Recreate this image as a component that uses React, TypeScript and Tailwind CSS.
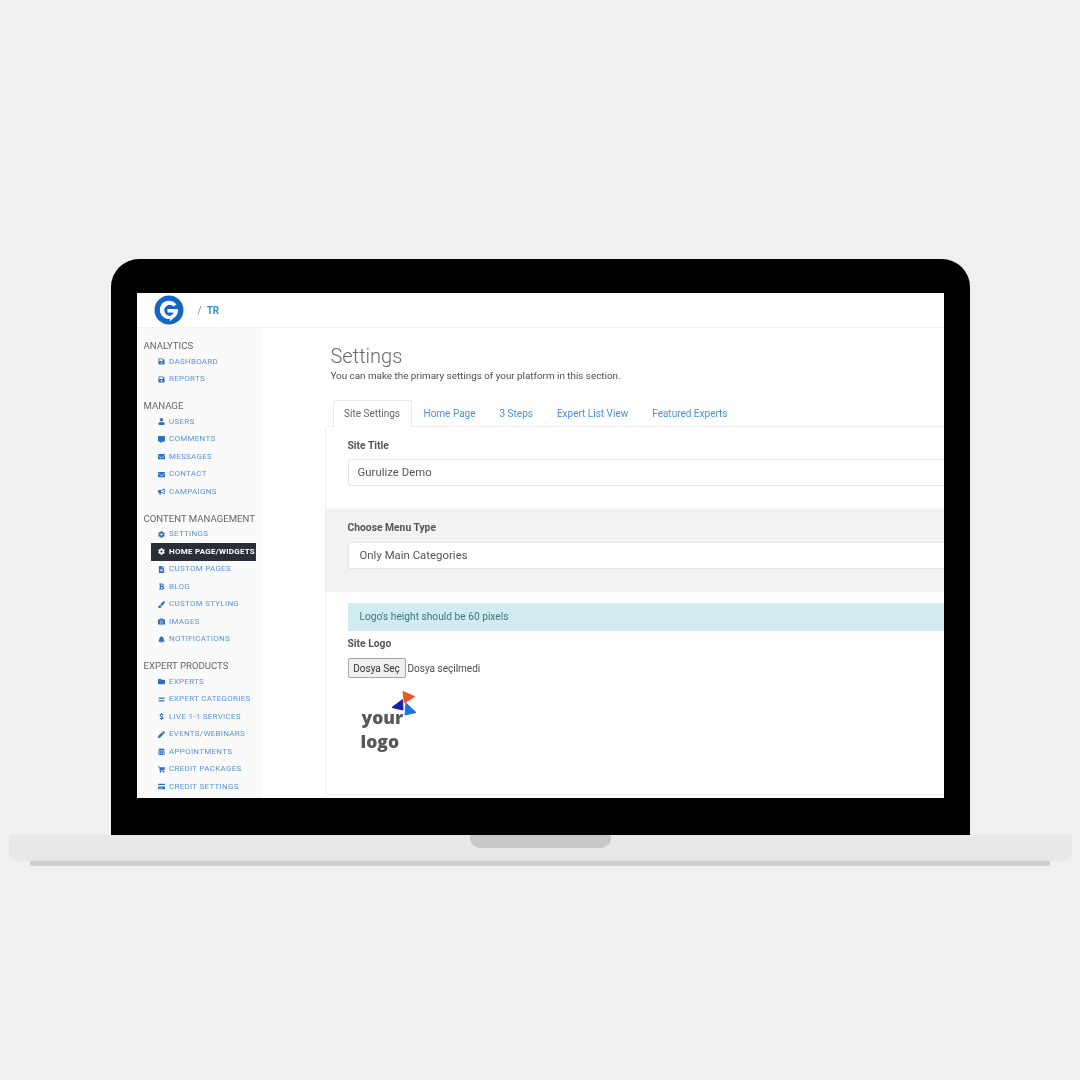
import type { ReactNode } from "react";
import {
  FaBell,
  FaBold,
  FaBullhorn,
  FaCalendarAlt,
  FaCamera,
  FaCog,
  FaCommentAlt,
  FaCreditCard,
  FaDollarSign,
  FaEnvelope,
  FaEquals,
  FaFileAlt,
  FaFolder,
  FaPaintBrush,
  FaPen,
  FaSave,
  FaShoppingCart,
  FaUser,
} from "react-icons/fa";

type NavItem = { icon: ReactNode; label: string; active?: boolean };

const groups: { title: string; items: NavItem[] }[] = [
  {
    title: "Analytics",
    items: [
      { icon: <FaSave />, label: "Dashboard" },
      { icon: <FaSave />, label: "Reports" },
    ],
  },
  {
    title: "Manage",
    items: [
      { icon: <FaUser />, label: "Users" },
      { icon: <FaCommentAlt />, label: "Comments" },
      { icon: <FaEnvelope />, label: "Messages" },
      { icon: <FaEnvelope />, label: "Contact" },
      { icon: <FaBullhorn />, label: "Campaigns" },
    ],
  },
  {
    title: "Content Management",
    items: [
      { icon: <FaCog />, label: "Settings" },
      { icon: <FaCog />, label: "Home Page/Widgets", active: true },
      { icon: <FaFileAlt />, label: "Custom Pages" },
      { icon: <FaBold />, label: "Blog" },
      { icon: <FaPaintBrush />, label: "Custom Styling" },
      { icon: <FaCamera />, label: "Images" },
      { icon: <FaBell />, label: "Notifications" },
    ],
  },
  {
    title: "Expert Products",
    items: [
      { icon: <FaFolder />, label: "Experts" },
      { icon: <FaEquals />, label: "Expert Categories" },
      { icon: <FaDollarSign />, label: "Live 1-1 Services" },
      { icon: <FaPen />, label: "Events/Webinars" },
      { icon: <FaCalendarAlt />, label: "Appointments" },
      { icon: <FaShoppingCart />, label: "Credit Packages" },
      { icon: <FaCreditCard />, label: "Credit Settings" },
    ],
  },
];

const tabs = ["Home Page", "3 Steps", "Expert List View", "Featured Experts"];

function Logo() {
  return (
    <svg viewBox="0 0 30 30" className="h-[30px] w-[30px]">
      <circle cx="15" cy="15" r="14.5" fill="#1366c4" />
      <path
        d="M22.5 9.5A9.2 9.2 0 1 0 16 24l1.5 -3.5A5.4 5.4 0 1 1 19.5 11.5Z"
        fill="#ffffff"
      />
      <path d="M13.5 14h10.5c.3 4.5-1.5 7.5-5.5 10l-3 2.5 1.5-6c1.5-.8 2.3-1.8 2.6-3H13.5Z" fill="#ffffff" />
    </svg>
  );
}

function Sidebar() {
  return (
    <aside className="w-[125px] shrink-0 self-stretch overflow-hidden bg-[#fafafa] pt-[11px] pl-[7px]">
      {groups.map((group) => (
        <div key={group.title} className="mb-[11px]">
          <div className="h-[14px] text-[9.6px] leading-[14px] whitespace-nowrap text-[#666666] uppercase">
            {group.title}
          </div>
          {group.items.map((item) => (
            <div
              key={item.label}
              className={
                item.active
                  ? "ml-[7px] flex h-[17.5px] w-[105px] items-center gap-[4.5px] overflow-hidden bg-[#2a2e37] pl-[7px] text-[8px] font-bold tracking-[0.25px] whitespace-nowrap text-white uppercase"
                  : "ml-[14px] flex h-[17.5px] items-center gap-[4.5px] text-[8px] tracking-[0.27px] whitespace-nowrap text-[#5b93d8] uppercase"
              }
            >
              <span className={item.active ? "text-[7px] text-white" : "text-[7px] text-[#2f6fc0]"}>{item.icon}</span>
              {item.label}
            </div>
          ))}
        </div>
      ))}
    </aside>
  );
}

function Label({ children }: { children: ReactNode }) {
  return <div className="text-[10.3px] leading-[14px] font-bold text-[#555555]">{children}</div>;
}

function TextBox({ value, inset }: { value: string; inset: string }) {
  return (
    <div className={`flex h-[27px] items-center rounded-[2px] border border-[#e4e4e4] bg-white pt-[1px] text-[11.3px] tracking-[0.05px] text-[#555555] ${inset}`}>
      {value}
    </div>
  );
}

function YourLogo() {
  return (
    <div className="relative mt-[11px] ml-[12px] h-[66px] w-[60px]">
      <svg viewBox="0 0 28 28" className="absolute top-[1px] left-[30px] h-[28px] w-[28px]">
        <path d="M13 1.5 L24.5 6.5 L14.5 13 Z" fill="#e8552a" stroke="#e8552a" strokeLinejoin="round" />
        <path d="M12.5 9.5 L13 20 L2 17.5 Z" fill="#1a1fa8" stroke="#1a1fa8" strokeLinejoin="round" />
        <path d="M16 13 L26 22.5 L15 25 Z" fill="#1c72e0" stroke="#1c72e0" strokeLinejoin="round" />
      </svg>
      <div className="absolute top-[17px] left-[2px] font-['Open_Sans',sans-serif] text-[17.5px] leading-[22px] font-extrabold text-[#585858]">your</div>
      <div className="absolute top-[41px] left-[1px] font-['Open_Sans',sans-serif] text-[17.5px] leading-[22px] font-extrabold text-[#585858]">logo</div>
    </div>
  );
}

function Settings() {
  return (
    <main className="min-w-0 flex-1 pt-[15px] pl-[63px]">
      <h1 className="ml-[6px] text-[20px] leading-[26px] font-light text-[#666a6e]">Settings</h1>
      <p className="ml-[6px] text-[9.85px] leading-[13px] text-[#4d4d4d]">
        You can make the primary settings of your platform in this section.
      </p>
      <div className="mt-[18px] ml-[8px] flex h-[26px] items-stretch text-[10px]">
        <div className="relative z-10 flex h-[27px] w-[79px] items-center justify-center rounded-t-[2px] border border-b-0 border-[#eaeaea] bg-white pb-[2px] text-[#666666]">
          Site Settings
        </div>
        <div className="ml-[12px] flex items-center gap-[24px] text-[#4a90d9]">
          {tabs.map((tab) => (
            <span key={tab}>{tab}</span>
          ))}
        </div>
      </div>
      <section className="h-[369px] w-[680px] rounded-[2px] border border-[#eeeeee] bg-white">
        <div className="px-[22px] pt-[12px] pb-[23px]">
          <Label>Site Title</Label>
          <div className="mt-[6px]">
            <TextBox value="Gurulize Demo" inset="pl-[9px]" />
          </div>
        </div>
        <div className="h-[83px] bg-[#f2f2f2] px-[22px] pt-[12px]">
          <Label>Choose Menu Type</Label>
          <div className="mt-[7px]">
            <TextBox value="Only Main Categories" inset="pl-[11px]" />
          </div>
        </div>
        <div className="px-[22px] pt-[11px]">
          <div className="flex h-[28px] items-center bg-[#d1ecf1] pl-[12px] text-[10.2px] text-[#3d7480]">
            Logo's height should be 60 pixels
          </div>
          <div className="mt-[6px]">
            <Label>Site Logo</Label>
          </div>
          <div className="mt-[7px] flex items-center text-[10px] text-[#4d4d4d]">
            <div className="flex h-[20px] w-[58px] items-center justify-center rounded-[2px] border border-[#a8a8a8] bg-[#efefef] text-[#333333]">
              Dosya Seç
            </div>
            <span className="ml-[2px]">Dosya seçilmedi</span>
          </div>
          <YourLogo />
        </div>
      </section>
    </main>
  );
}

export default function App() {
  return (
    <div className="flex h-[1080px] w-[1080px] flex-col items-center overflow-hidden bg-[#f0f0f0] pt-[259px] font-['Roboto',sans-serif]">
      <div className="h-[576px] w-[859px] rounded-t-[28px] bg-black px-[26px] pt-[34px]">
        <div className="h-[505px] w-[807px] overflow-hidden bg-white blur-[0.5px]">
          <header className="flex h-[35px] items-center border-b border-[#f3f3f3] pl-[17px]">
            <Logo />
            <span className="ml-[14px] text-[10px] text-[#888888]">/</span>
            <span className="ml-[5px] text-[10px] font-bold text-[#3b8fd6]">TR</span>
          </header>
          <div className="flex h-[470px]">
            <Sidebar />
            <Settings />
          </div>
        </div>
      </div>
      <div className="flex h-[26px] w-[1063px] justify-center rounded-b-[8px] bg-[#e8e8e8]">
        <div className="h-[13px] w-[141px] rounded-b-[10px] bg-[#c8c8c8]" />
      </div>
      <div className="h-[5px] w-[1020px] bg-[#cfcfcf]" />
    </div>
  );
}
